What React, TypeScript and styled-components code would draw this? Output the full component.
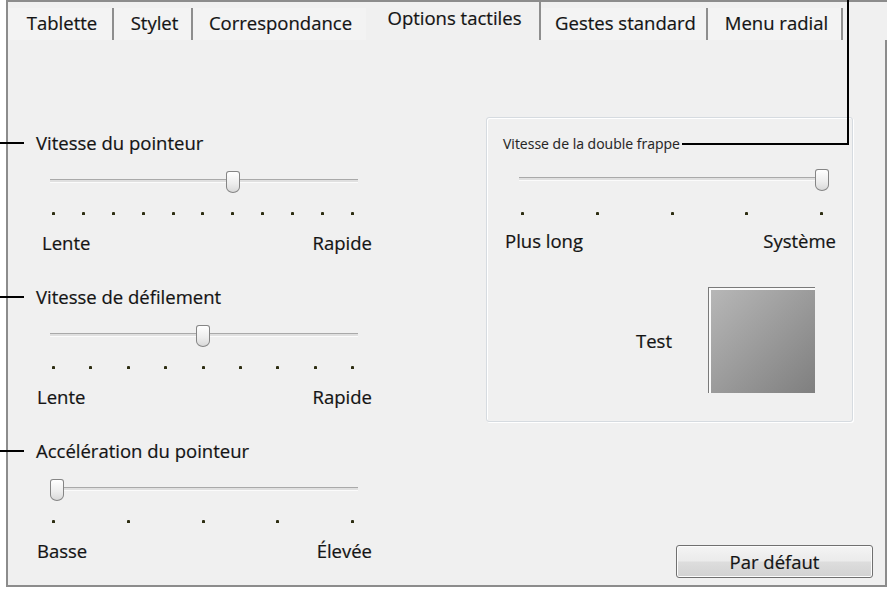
import React from "react";
import styled, { createGlobalStyle } from "styled-components";

const GlobalStyle = createGlobalStyle`
  body {
    margin: 0;
    background: #fff;
    font-family: "Open Sans", "Noto Sans", sans-serif;
    color: #141414;
    -webkit-text-stroke: 0.2px #141414;
  }
`;

const Frame = styled.div`
  margin-left: 6px;
  width: 881px;
  height: 587px;
  box-sizing: border-box;
  border-top: 2px solid #8c8c8c;
  border-left: 2px solid #8c8c8c;
  border-bottom: 2px solid #8c8c8c;
  background: #f0f0f0;
  display: flex;
  flex-direction: column;
`;

const TabBar = styled.div`
  height: 38px;
  display: flex;
  align-items: flex-end;
`;

const Tab = styled.div<{ $w: number; $active?: boolean; $sep?: boolean }>`
  width: ${(p) => p.$w}px;
  height: ${(p) => (p.$active ? 38 : 32)}px;
  box-sizing: border-box;
  padding-top: ${(p) => (p.$active ? 4 : 3)}px;
  padding-left: 4px;
  text-align: center;
  font-size: 18.5px;
  line-height: 24px;
  white-space: nowrap;
  background: ${(p) => (p.$active ? "#f0f0f0" : "#f3f3f3")};
  border-right: 2px solid ${(p) => (p.$sep ? "#8e8e8e" : "transparent")};
`;

const Panel = styled.div`
  flex: 1;
  display: flex;
  border-right: 2px solid #8c8c8c;
`;

const LeftColumn = styled.div`
  width: 478px;
  padding-top: 91px;
  display: flex;
  flex-direction: column;
  gap: 30px;
`;

const Section = styled.div`
  display: flex;
  flex-direction: column;
`;

const Title = styled.div`
  position: relative;
  margin-left: 28px;
  font-size: 18.5px;
  line-height: 24px;
  &::before {
    content: "";
    position: absolute;
    left: -36px;
    top: 11px;
    width: 24px;
    height: 2px;
    background: #000;
  }
`;

const SliderBox = styled.div<{ $left: number; $top: number }>`
  position: relative;
  width: 308px;
  height: 24px;
  margin-left: ${(p) => p.$left}px;
  margin-top: ${(p) => p.$top}px;
  display: flex;
  align-items: center;
`;

const Track = styled.div`
  flex: 1;
  height: 2px;
  border-top: 1px solid #a9a9a9;
  background: #e0e0e0;
  border-bottom: 1px solid #fbfbfb;
`;

const Thumb = styled.div`
  position: absolute;
  top: 2px;
  width: 14px;
  height: 22px;
  box-sizing: border-box;
  border: 1px solid #858585;
  border-radius: 3px 3px 7px 7px / 3px 3px 6px 6px;
  background: linear-gradient(#ffffff, #ececec 60%, #d9d9d9);
`;

const TickRow = styled.div<{ $left: number; $top: number }>`
  width: 302px;
  height: 4px;
  margin-left: ${(p) => p.$left}px;
  margin-top: ${(p) => p.$top}px;
  display: flex;
  justify-content: space-between;
`;

const Tick = styled.span`
  width: 3px;
  height: 3px;
  margin-top: 1px;
  border-radius: 1px 1px 0 0;
  background: #2e2e12;
`;

const EndLabels = styled.div<{ $left: number; $right: number; $top: number }>`
  display: flex;
  justify-content: space-between;
  margin-left: ${(p) => p.$left}px;
  margin-right: ${(p) => p.$right}px;
  margin-top: ${(p) => p.$top}px;
  font-size: 18.5px;
  line-height: 24px;
`;

const RightColumn = styled.div`
  flex: 1;
  display: flex;
  flex-direction: column;
`;

const GroupBox = styled.div`
  margin-top: 77px;
  width: 367px;
  box-sizing: border-box;
  padding: 16px 0 28px;
  border: 1px solid #d6dbe0;
  border-radius: 3px;
  box-shadow: inset 1px 1px 0 #fff, 1px 1px 0 #fff;
  display: flex;
  flex-direction: column;
`;

const GroupTitleRow = styled.div`
  display: flex;
  align-items: center;
  height: 20px;
  margin-left: 16px;
  margin-right: 3px;
`;

const GroupTitle = styled.span`
  font-size: 14px;
  line-height: 20px;
  color: #262626;
  -webkit-text-stroke: 0.1px #262626;
`;

const Connector = styled.span`
  position: relative;
  flex: 1;
  height: 2px;
  margin-left: 2px;
  background: #000;
  &::after {
    content: "";
    position: absolute;
    right: 0;
    bottom: 0;
    width: 2px;
    height: 146px;
    background: #000;
  }
`;

const TestRow = styled.div`
  display: flex;
  justify-content: flex-end;
  align-items: center;
  gap: 36px;
  margin-top: 34px;
  margin-right: 37px;
  font-size: 18.5px;
`;

const TestPad = styled.div`
  width: 107px;
  height: 106px;
  box-sizing: border-box;
  border-top: 1px solid #7a7a7a;
  border-left: 1px solid #7a7a7a;
  box-shadow: inset 2px 2px 0 #fafafa;
  background: linear-gradient(135deg, #b8b8b8, #7f7f7f);
`;

const Button = styled.button`
  margin-top: auto;
  margin-right: 12px;
  margin-bottom: 7px;
  align-self: flex-end;
  width: 197px;
  height: 33px;
  border: 1px solid #707070;
  border-radius: 3px;
  background: linear-gradient(#f4f4f4, #ebebeb 48%, #dddddd 52%, #d2d2d2);
  box-shadow: inset 0 0 0 1px #fcfcfc;
  font-family: "Open Sans", "Noto Sans", sans-serif;
  font-size: 18.5px;
  color: #141414;
  padding: 0;
`;

type SliderProps = {
  ticks: number;
  value: number;
  left: number;
  top: number;
  tickGap: number;
};

function Slider({ ticks, value, left, top, tickGap }: SliderProps) {
  const frac = value / (ticks - 1);
  const thumbLeft = Math.max(0, 3.5 + frac * 299 - 7);
  return (
    <>
      <SliderBox $left={left} $top={top}>
        <Track />
        <Thumb style={{ left: thumbLeft }} />
      </SliderBox>
      <TickRow $left={left + 2} $top={tickGap}>
        {Array.from({ length: ticks }, (_, i) => (
          <Tick key={i} />
        ))}
      </TickRow>
    </>
  );
}

const sections = [
  { title: "Vitesse du pointeur", ticks: 11, value: 6, min: "Lente", max: "Rapide", inset: 34 },
  { title: "Vitesse de défilement", ticks: 9, value: 4, min: "Lente", max: "Rapide", inset: 29 },
  { title: "Accélération du pointeur", ticks: 5, value: 0, min: "Basse", max: "Élevée", inset: 29 },
];

const tabs = [
  { label: "Tablette", w: 106, sep: true },
  { label: "Stylet", w: 79, sep: true },
  { label: "Correspondance", w: 173, sep: false },
  { label: "Options tactiles", w: 175, sep: true, active: true },
  { label: "Gestes standard", w: 167, sep: true },
  { label: "Menu radial", w: 135, sep: true },
];

export default function App() {
  return (
    <>
      <GlobalStyle />
      <Frame>
        <TabBar>
          {tabs.map((t) => (
            <Tab key={t.label} $w={t.w} $sep={t.sep} $active={t.active}>
              {t.label}
            </Tab>
          ))}
        </TabBar>
        <Panel>
          <LeftColumn>
            {sections.map((s) => (
              <Section key={s.title}>
                <Title>{s.title}</Title>
                <Slider ticks={s.ticks} value={s.value} left={42} top={14} tickGap={18} />
                <EndLabels $left={s.inset} $right={114} $top={16}>
                  <span>{s.min}</span>
                  <span>{s.max}</span>
                </EndLabels>
              </Section>
            ))}
          </LeftColumn>
          <RightColumn>
            <GroupBox>
              <GroupTitleRow>
                <GroupTitle>Vitesse de la double frappe</GroupTitle>
                <Connector />
              </GroupTitleRow>
              <Slider ticks={5} value={4} left={32} top={13} tickGap={20} />
              <EndLabels $left={18} $right={16} $top={14}>
                <span>Plus long</span>
                <span>Système</span>
              </EndLabels>
              <TestRow>
                <span>Test</span>
                <TestPad />
              </TestRow>
            </GroupBox>
            <Button>Par défaut</Button>
          </RightColumn>
        </Panel>
      </Frame>
    </>
  );
}
